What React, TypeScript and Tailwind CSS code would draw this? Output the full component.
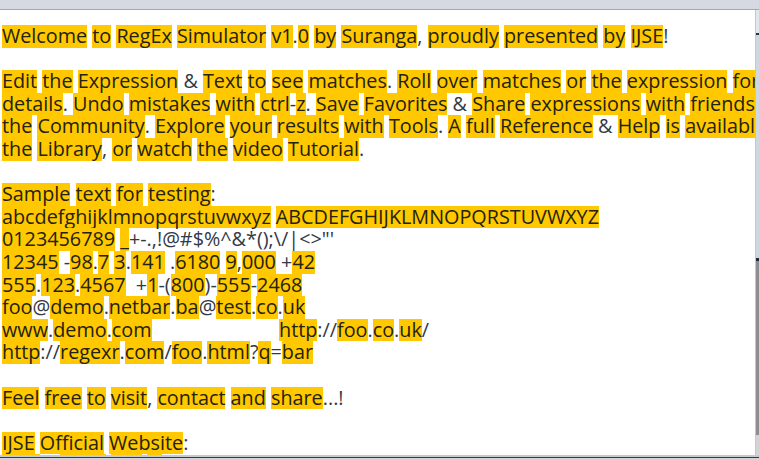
import React from "react";

const LINES: string[] = [
  "Welcome to RegEx Simulator v1.0 by Suranga, proudly presented by IJSE!",
  "",
  "Edit the Expression & Text to see matches. Roll over matches or the expression for",
  "details. Undo mistakes with ctrl-z. Save Favorites & Share expressions with friends or",
  "the Community. Explore your results with Tools. A full Reference & Help is available in",
  "the Library, or watch the video Tutorial.",
  "",
  "Sample text for testing:",
  "abcdefghijklmnopqrstuvwxyz ABCDEFGHIJKLMNOPQRSTUVWXYZ",
  "0123456789 _+-.,!@#$%^&*();\\/|<>\"'",
  "12345 -98.7 3.141 .6180 9,000 +42",
  "555.123.4567  +1-(800)-555-2468",
  "foo@demo.netbar.ba@test.co.uk",
  "TAB",
  "http://regexr.com/foo.html?q=bar",
  "",
  "Feel free to visit, contact and share...!",
  "",
  "IJSE Official Website:",
  "http://www.ijse.lk",
];

function Highlighted({ text }: { text: string }) {
  const parts: React.ReactNode[] = [];
  const re = /\w+/g;
  let last = 0;
  let m: RegExpExecArray | null;
  let k = 0;
  while ((m = re.exec(text)) !== null) {
    if (m.index > last) parts.push(<span key={k++}>{text.slice(last, m.index)}</span>);
    parts.push(
      <span key={k++} className="inline-block bg-[#ffc800] text-[#24220f]">
        {m[0]}
      </span>
    );
    last = m.index + m[0].length;
  }
  if (last < text.length) parts.push(<span key={k++}>{text.slice(last)}</span>);
  return <>{parts}</>;
}

export default function App() {
  return (
    <div className="w-[759px] h-[460px] overflow-hidden flex flex-col bg-white">
      <div className="h-[10px] shrink-0 bg-[#d6d9e2] border-b border-[#a3a7b0]" />
      <div className="flex flex-1 min-h-0">
        <div
          className="flex-1 min-w-0 overflow-hidden pl-[2px] pt-[15px] text-[19.8px] leading-[22.6px] text-[#333845] whitespace-pre"
          style={{ fontFamily: '"Open Sans", sans-serif' }}
        >
          {LINES.map((l, i) =>
            l === "TAB" ? (
              <div key={i} className="h-[22.6px]">
                <span className="inline-block w-[277px]">
                  <Highlighted text="www.demo.com" />
                </span>
                <Highlighted text="http://foo.co.uk/" />
              </div>
            ) : (
              <div key={i} className="h-[22.6px]">
                <Highlighted text={l} />
              </div>
            )
          )}
        </div>
        <div className="w-[4px] shrink-0 flex flex-col border-l border-[#c3c7cf]">
          <div className="h-[23px] bg-[#e3e6eb]" />
          <div className="h-[2px] bg-[#2c3540]" />
          <div className="h-[223px] bg-[#cfd7e2]" />
          <div className="h-[3px] bg-[#1f2a35]" />
          <div className="h-[174px] bg-[#8d8d92]" />
          <div className="flex-1 bg-[#d4d4d6]" />
        </div>
      </div>
      <div className="h-[5px] shrink-0 flex flex-col">
        <div className="h-[2px] bg-[#c8c9cc]" />
        <div className="h-[1px] bg-[#3a3c40]" />
        <div className="flex-1 bg-[#d2d3d6]" />
      </div>
    </div>
  );
}
